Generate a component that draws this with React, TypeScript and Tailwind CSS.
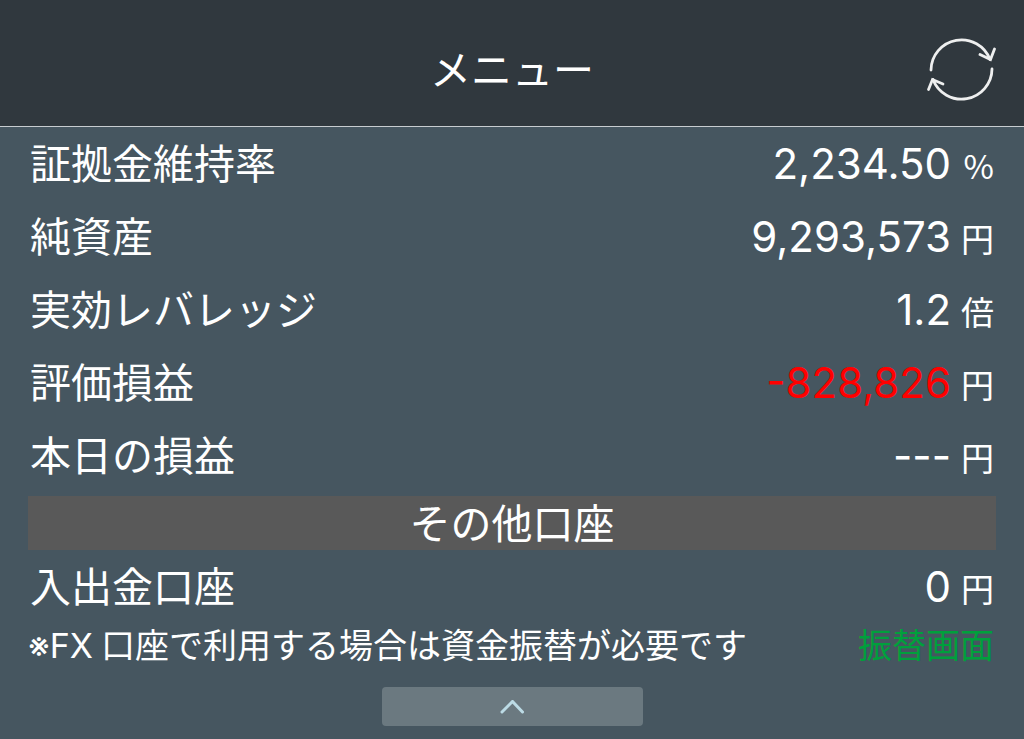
interface AccountRow {
  label: string;
  value: string;
  unit: string;
  negative?: boolean;
}

const rows: AccountRow[] = [
  { label: '証拠金維持率', value: '2,234.50', unit: '%' },
  { label: '純資産', value: '9,293,573', unit: '円' },
  { label: '実効レバレッジ', value: '1.2', unit: '倍' },
  { label: '評価損益', value: '-828,826', unit: '円', negative: true },
  { label: '本日の損益', value: '---', unit: '円' },
];

const cashRow: AccountRow = { label: '入出金口座', value: '0', unit: '円' };

function Row({ label, value, unit, negative }: AccountRow) {
  return (
    <div className="flex items-baseline justify-between">
      <dt className="text-[41px] leading-[69px]">{label}</dt>
      <dd className="flex items-baseline gap-2.5 leading-[69px]">
        <span
          className={
            negative
              ? "font-['Inter',sans-serif] text-[42px] text-[#ff0000]"
              : "font-['Inter',sans-serif] text-[42px]"
          }
        >
          {value}
        </span>
        <span className="min-w-[33px] text-right text-[33px]">{unit}</span>
      </dd>
    </div>
  );
}

function RefreshIcon() {
  return (
    <svg
      viewBox="0 0 72 68"
      aria-hidden="true"
      className="h-[68px] w-[72px]"
      fill="none"
      stroke="#eeefef"
      strokeWidth="2.8"
      strokeLinecap="round"
    >
      <path d="M7 34A30.5 30.5 0 0 1 66 23.5" />
      <path d="M56 18.5L66.5 23.5L70.5 13" />
      <path d="M68 33A30.5 30.5 0 0 1 9 43.5" />
      <path d="M19 48L8.5 43.5L4.5 53.5" />
    </svg>
  );
}

function App() {
  return (
    <div className="min-h-screen bg-[#465660] font-['Noto_Sans_CJK_JP',sans-serif] text-white">
      <header className="grid grid-cols-[1fr_auto_1fr] items-center border-b border-[#c8cdd0] bg-[#30383e] px-7 pt-8 pb-[18px]">
        <h1 className="col-start-2 pb-1.5 text-[41px] leading-[70px]">メニュー</h1>
        <button type="button" aria-label="更新" className="justify-self-end">
          <RefreshIcon />
        </button>
      </header>
      <main className="px-7">
        <dl className="px-0.5 pb-1">
          {rows.map(row => (
            <Row key={row.label} {...row} />
          ))}
        </dl>
        <h2 className="bg-[#595959] pb-1 text-center text-[41px] leading-[50px]">その他口座</h2>
        <dl className="px-0.5">
          <Row {...cashRow} />
        </dl>
        <div className="flex items-baseline justify-between pr-0.5 text-[34px] leading-[42px]">
          <p>
            <span className="mr-2 font-['Inter','Noto_Sans_CJK_JP',sans-serif]">※FX</span>
            口座で利用する場合は資金振替が必要です
          </p>
          <a href="#transfer" className="text-[#00a03c]">
            振替画面
          </a>
        </div>
        <button
          type="button"
          aria-label="閉じる"
          className="mx-auto mt-5 flex h-[39px] w-[261px] items-center justify-center rounded bg-[#6b7980]"
        >
          <svg
            viewBox="0 0 24 14"
            aria-hidden="true"
            className="h-3.5 w-6"
            fill="none"
            stroke="#bcdbe5"
            strokeWidth="3"
            strokeLinecap="round"
          >
            <path d="M2 12L12.5 1.5L22.5 12" />
          </svg>
        </button>
      </main>
    </div>
  );
}

export default App;
